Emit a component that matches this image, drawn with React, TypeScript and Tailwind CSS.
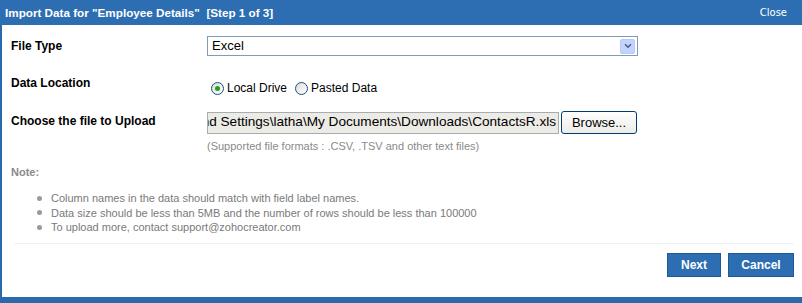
import { ChevronDown } from "lucide-react";

const notes = [
  "Column names in the data should match with field label names.",
  "Data size should be less than 5MB and the number of rows should be less than 100000",
  "To upload more, contact support@zohocreator.com",
];

function Radio({ checked }: { checked?: boolean }) {
  return (
    <span className="w-[13px] h-[13px] rounded-full border border-[#1c5180] bg-gradient-to-br from-[#dcdcd7] to-white flex items-center justify-center">
      {checked && <span className="w-[5px] h-[5px] rounded-full bg-[#21a121]" />}
    </span>
  );
}

export default function App() {
  return (
    <div className="w-[802px] h-[303px] bg-white border-l-2 border-b-[6px] border-[#2a6aac] flex flex-col font-['Liberation_Sans',Arial,sans-serif] text-[12px] text-black">
      {/* Header */}
      <div className="h-[25px] shrink-0 bg-[#2c6eb1] flex items-center justify-between pl-[5px] pr-[15px] -ml-[2px]">
        <span className="text-white font-bold text-[11.7px] whitespace-pre">
          Import Data for "Employee Details"  [Step 1 of 3]
        </span>
        <span className="text-white text-[10px] font-['DejaVu_Sans',Verdana,sans-serif]">Close</span>
      </div>

      <div className="flex-1 flex flex-col pl-[9px] pr-[8px]">
        {/* File type */}
        <div className="flex items-start mt-[11px]">
          <div className="w-[196px] font-bold pt-px">File Type</div>
          <div className="w-[431px] h-[20px] border border-[#7f9db9] flex items-center justify-between pl-[4px] pr-[2px] text-[13px]">
            <span>Excel</span>
            <span className="w-[15px] h-[15px] bg-[#c3d3fd] border border-[#b7c9f5] rounded-[2px] flex items-center justify-center">
              <ChevronDown className="w-[10px] h-[10px] text-[#4d6185]" strokeWidth={4} />
            </span>
          </div>
        </div>

        {/* Data location */}
        <div className="flex items-start mt-[18px]">
          <div className="w-[196px] font-bold">Data Location</div>
          <div className="flex items-center gap-[3px] mt-[5px] ml-[4px] text-[12px]">
            <Radio checked />
            <span className="mr-[5px]">Local Drive</span>
            <Radio />
            <span>Pasted Data</span>
          </div>
        </div>

        {/* File upload */}
        <div className="flex items-start mt-[14px]">
          <div className="w-[196px] font-bold pt-[1px]">Choose the file to Upload</div>
          <div className="flex flex-col">
            <div className="flex items-center gap-[2px]">
              <div className="w-[352px] h-[22px] border border-[#a5acb2] bg-[#ecebe6] overflow-hidden flex items-center justify-end pr-[2px] text-[13.6px] whitespace-nowrap">
                <span className="shrink-0">and Settings\latha\My Documents\Downloads\ContactsR.xls</span>
              </div>
              <button className="w-[76px] h-[23px] border border-[#003c74] rounded-[3px] bg-gradient-to-b from-white to-[#ecebe6] text-[13px]">
                Browse...
              </button>
            </div>
            <div className="text-[11px] text-[#8a8a8a] mt-[4px]">
              (Supported file formats : .CSV, .TSV and other text files)
            </div>
          </div>
        </div>

        {/* Note */}
        <div className="text-[11px] font-bold text-[#8a8a8a] mt-[9px]">Note:</div>
        <ul className="mt-[11px] ml-[26px] flex flex-col text-[11px] text-[#7a7a7a] leading-[14.5px]">
          {notes.map((n) => (
            <li key={n} className="flex items-center gap-[9px]">
              <span className="w-[5px] h-[5px] rounded-full bg-[#9a9a9a]" />
              {n}
            </li>
          ))}
        </ul>

        <div className="mt-[8px] ml-[3px] border-t border-[#f0f0f4]" />

        {/* Footer */}
        <div className="flex justify-end gap-[7px] mt-[9px]">
          <button className="w-[54px] h-[24px] bg-[#2c6eb1] border border-[#1f5a96] text-white font-bold text-[12px]">
            Next
          </button>
          <button className="w-[66px] h-[24px] bg-[#2c6eb1] border border-[#1f5a96] text-white font-bold text-[12px]">
            Cancel
          </button>
        </div>
      </div>
    </div>
  );
}
